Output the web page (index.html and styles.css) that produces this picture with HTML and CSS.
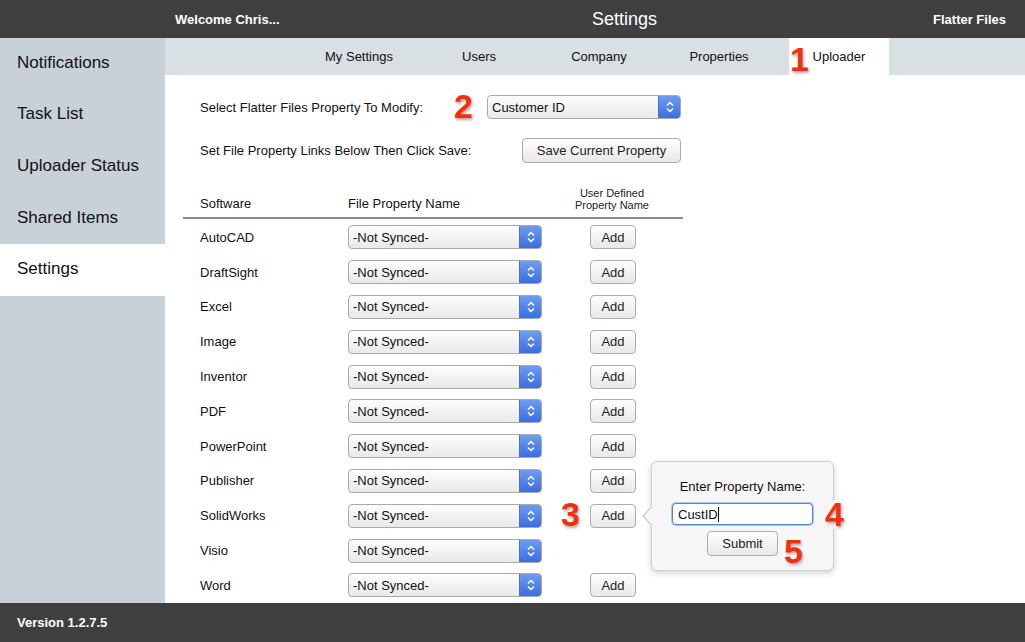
FILE: index.html
```html
<!DOCTYPE html>
<html lang="en">

<head>
    <meta charset="UTF-8">
    <meta name="viewport" content="width=device-width, initial-scale=1.0">
    <title>Settings - Flatter Files</title>
    <link rel="stylesheet" href="styles.css">
</head>

<body>
    <div class="page">
        <div class="topbar">
            <div class="welcome">Welcome Chris...</div>
            <div class="title">Settings</div>
            <div class="brand">Flatter Files</div>
        </div>

        <div class="main">
            <div class="sidebar">
                <div class="side-item">Notifications</div>
                <div class="side-item">Task List</div>
                <div class="side-item">Uploader Status</div>
                <div class="side-item">Shared Items</div>
                <div class="side-item active">Settings</div>
            </div>

            <div class="content">
                <div class="tabs">
                    <div class="tab">My Settings</div>
                    <div class="tab">Users</div>
                    <div class="tab">Company</div>
                    <div class="tab">Properties</div>
                    <div class="tab active">Uploader</div>
                </div>

                <div class="panel">
                    <div class="form-row">
                        <span>Select Flatter Files Property To Modify:</span>
                        <div class="select wide">
                            <span class="value">Customer ID</span>
                            <span class="stepper"><svg width="8" height="12" viewBox="0 0 8 12"><path d="M1 4.5 L4 1.5 L7 4.5 M1 7.5 L4 10.5 L7 7.5" fill="none" stroke="#fff" stroke-width="1.5"/></svg></span>
                        </div>
                    </div>
                    <div class="form-row second">
                        <span>Set File Property Links Below Then Click Save:</span>
                        <button class="btn save">Save Current Property</button>
                    </div>

                    <div class="grid head">
                        <div class="cell">Software</div>
                        <div class="cell">File Property Name</div>
                        <div class="cell small">User Defined<br>Property Name</div>
                    </div>
                    <div class="rows" id="rows"></div>

                    <div class="popover">
                        <div class="pop-label">Enter Property Name:</div>
                        <div class="pop-input">CustID<span class="caret"></span></div>
                        <button class="btn submit">Submit</button>
                    </div>
                </div>
            </div>
        </div>

        <div class="footer">Version 1.2.7.5</div>

        <span class="mark m1">1</span>
        <span class="mark m2">2</span>
        <span class="mark m3">3</span>
        <span class="mark m4">4</span>
        <span class="mark m5">5</span>
    </div>

    <script>
        const software = ["AutoCAD", "DraftSight", "Excel", "Image", "Inventor", "PDF",
            "PowerPoint", "Publisher", "SolidWorks", "Visio", "Word"];

        let html = "";
        software.forEach(name => {
            const add = name == "Visio" ? "" : '<button class="btn add">Add</button>';
            html += '<div class="grid row">' +
                '<div class="cell">' + name + '</div>' +
                '<div class="cell"><div class="select"><span class="value">-Not Synced-</span>' +
                '<span class="stepper"><svg width="8" height="12" viewBox="0 0 8 12"><path d="M1 4.5 L4 1.5 L7 4.5 M1 7.5 L4 10.5 L7 7.5" fill="none" stroke="#fff" stroke-width="1.5"/></svg></span></div></div>' +
                '<div class="cell addcell">' + add + '</div>' +
                '</div>';
        });
        document.getElementById("rows").innerHTML = html;
    </script>
</body>

</html>
```

FILE: styles.css
```css
* {
    box-sizing: border-box;
}

body {
    margin: 0;
    font-family: "Liberation Sans", Arial, sans-serif;
    font-size: 13px;
    color: #111;
}

.page {
    position: relative;
    width: 1025px;
    height: 642px;
    display: flex;
    flex-direction: column;
    overflow: hidden;
}

.topbar {
    height: 38px;
    background-color: #3f3f3f;
    color: white;
    display: flex;
    align-items: center;
    padding: 0 19px 0 175px;
}

.welcome {
    width: 417px;
    font-weight: bold;
    font-size: 13px;
}

.title {
    font-size: 18px;
}

.brand {
    margin-left: auto;
    font-weight: bold;
    font-size: 13px;
}

.main {
    flex: 1;
    display: flex;
}

.sidebar {
    width: 165px;
    background-color: #c8d0d8;
}

.side-item {
    height: 51.6px;
    display: flex;
    align-items: center;
    padding: 0 0 2px 17px;
    font-size: 17px;
}

.side-item.active {
    background-color: white;
}

.content {
    flex: 1;
    display: flex;
    flex-direction: column;
}

.tabs {
    height: 37px;
    background-color: #d8e0e3;
    display: flex;
    justify-content: center;
    padding-left: 8px;
}

.tab {
    width: 100px;
    margin: 0 10px;
    display: flex;
    align-items: center;
    justify-content: center;
    font-size: 13px;
}

.tab.active {
    background-color: white;
}

.panel {
    position: relative;
    flex: 1;
    padding: 20px 0 0 18px;
}

.form-row {
    width: 498px;
    padding-left: 17px;
    display: flex;
    align-items: center;
    justify-content: space-between;
}

.form-row.second {
    margin-top: 19px;
}

.select {
    position: relative;
    width: 194px;
    height: 24px;
    border: 1px solid #a9a9a9;
    border-radius: 4px;
    background: linear-gradient(#fdfdfd, #e9e9e9);
    display: flex;
    align-items: center;
    overflow: hidden;
}

.select .value {
    flex: 1;
    padding-left: 4px;
}

.select .stepper {
    width: 22px;
    height: 100%;
    background: linear-gradient(#6d9cf3, #3c6de0);
    border-left: 1px solid #4a72cc;
    display: flex;
    align-items: center;
    justify-content: center;
}

.btn {
    font-family: "Liberation Sans", Arial, sans-serif;
    font-size: 13px;
    color: #222;
    height: 25px;
    border: 1px solid #acacac;
    border-radius: 4px;
    background: linear-gradient(#fefefe, #e8e8e8);
    padding: 0;
}

.btn.save {
    width: 159px;
}

.grid {
    width: 500px;
    display: grid;
    grid-template-columns: 165px 211px 106px;
}

.head {
    margin-top: 17px;
    height: 39px;
    border-bottom: 2px solid #8a8a8a;
    align-items: end;
    padding-bottom: 6px;
}

.head .cell:first-child {
    padding-left: 17px;
}

.head .small {
    font-size: 11px;
    line-height: 12px;
    text-align: center;
    color: #222;
}

.rows {
    padding-top: 1px;
}

.row {
    height: 34.8px;
    align-items: center;
}

.row .cell:first-child {
    padding-left: 17px;
}

.addcell {
    padding-left: 31px;
}

.btn.add {
    width: 46px;
    height: 24px;
}

.popover {
    position: absolute;
    left: 486px;
    top: 386px;
    width: 183px;
    height: 110px;
    background-color: #f6f6f6;
    border: 1px solid #cfcfcf;
    border-radius: 6px;
    box-shadow: 0 2px 6px rgba(0, 0, 0, 0.18);
    display: flex;
    flex-direction: column;
    align-items: center;
    padding-top: 17px;
}

.popover::before {
    content: "";
    position: absolute;
    left: -10px;
    top: 43px;
    border-top: 11px solid transparent;
    border-bottom: 11px solid transparent;
    border-right: 10px solid #cfcfcf;
}

.popover::after {
    content: "";
    position: absolute;
    left: -8px;
    top: 44px;
    border-top: 10px solid transparent;
    border-bottom: 10px solid transparent;
    border-right: 9px solid #f6f6f6;
}

.pop-label {
    font-size: 13px;
}

.pop-input {
    margin-top: 9px;
    width: 141px;
    height: 22px;
    background-color: white;
    border: 1px solid #4f86d9;
    border-radius: 4px;
    box-shadow: 0 0 0 1px #a9c6f0;
    display: flex;
    align-items: center;
    padding-left: 5px;
    font-size: 13px;
}

.caret {
    width: 1px;
    height: 15px;
    background-color: #111;
}

.btn.submit {
    margin-top: 6px;
    width: 71px;
    height: 25px;
}

.footer {
    height: 39px;
    background-color: #3f3f3f;
    color: white;
    font-weight: bold;
    font-size: 13px;
    display: flex;
    align-items: center;
    padding-left: 17px;
}

.mark {
    position: absolute;
    font-family: "Liberation Sans", Arial, sans-serif;
    font-weight: bold;
    font-size: 34px;
    line-height: 34px;
    color: #f2300f;
    -webkit-text-stroke: 5px white;
    paint-order: stroke fill;
    text-shadow: 1px 2px 3px rgba(0, 0, 0, 0.35);
}

.m1 {
    left: 790px;
    top: 42px;
}

.m2 {
    left: 454px;
    top: 89px;
}

.m3 {
    left: 561px;
    top: 497px;
}

.m4 {
    left: 825px;
    top: 497px;
}

.m5 {
    left: 784px;
    top: 534px;
}
```
